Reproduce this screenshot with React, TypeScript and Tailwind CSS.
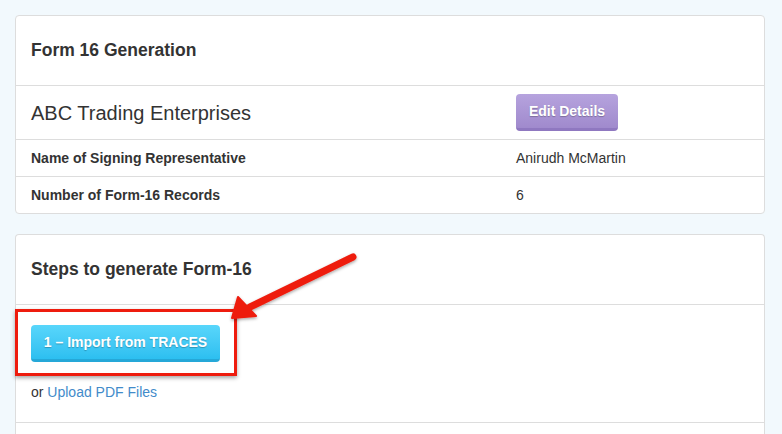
import React from 'react'

const font = { fontFamily: '"Liberation Sans", Arial, sans-serif' }

function InfoRow({ label, value }: { label: string; value: string }) {
  return (
    <div className="flex h-[37px] items-center border-t border-[#dddddd]">
      <div className="w-[500px] pl-[15px] text-[14px] font-bold text-[#333333]">{label}</div>
      <div className="text-[14px] text-[#333333]">{value}</div>
    </div>
  )
}

function Arrow() {
  return (
    <svg
      className="pointer-events-none absolute left-[222px] top-[245px]"
      width="150"
      height="90"
      viewBox="0 0 150 90"
    >
      <defs>
        <filter id="sh" x="-20%" y="-20%" width="140%" height="140%">
          <feDropShadow dx="0" dy="1.5" stdDeviation="1.5" floodColor="#000" floodOpacity="0.35" />
        </filter>
      </defs>
      <g filter="url(#sh)">
        <line x1="131" y1="12" x2="28" y2="62" stroke="#ee1c0e" strokeWidth="7" strokeLinecap="round" />
        <path d="M10 73 L16 52 L34 71 Z" fill="#ee1c0e" stroke="#ee1c0e" strokeWidth="2" strokeLinejoin="round" />
      </g>
    </svg>
  )
}

export default function App() {
  return (
    <div className="relative min-h-[434px] bg-[#f2f9fd] pl-[15px] pr-[17px] pt-[15px]" style={font}>
      <div className="rounded-[4px] border border-[#dddddd] bg-white">
        <div className="flex h-[69px] items-center pl-[15px] text-[17.5px] font-bold text-[#333333]">
          Form 16 Generation
        </div>
        <div className="flex h-[54px] items-center border-t border-[#dddddd]">
          <div className="w-[500px] pl-[15px] text-[20px] text-[#333333]">ABC Trading Enterprises</div>
          <button className="h-[37px] w-[102px] rounded-[4px] border-b-[3px] border-[#8f78c0] bg-gradient-to-b from-[#b6a3de] to-[#a08acd] text-[14px] font-bold text-white [text-shadow:0_1px_1px_rgba(0,0,0,0.25)]">
            Edit Details
          </button>
        </div>
        <InfoRow label="Name of Signing Representative" value="Anirudh McMartin" />
        <InfoRow label="Number of Form-16 Records" value="6" />
      </div>

      <div className="mt-[20px] rounded-t-[4px] border border-b-0 border-[#dddddd] bg-white">
        <div className="flex h-[69px] items-center pl-[15px] text-[17.5px] font-bold text-[#333333]">
          Steps to generate Form-16
        </div>
        <div className="border-t border-[#dddddd] pb-[19px] pl-[15px] pt-[20px]">
          <button className="h-[37px] w-[189px] rounded-[4px] border-b-[3px] border-[#25a8d8] bg-gradient-to-b from-[#58d6fb] to-[#2cbff0] text-[14px] font-bold text-white [text-shadow:0_1px_1px_rgba(0,0,0,0.25)]">
            1 – Import from TRACES
          </button>
          <div className="mt-[20px] text-[14px] text-[#333333]">
            or <span className="text-[#428bca]">Upload PDF Files</span>
          </div>
        </div>
        <div className="h-[20px] border-t border-[#dddddd]" />
      </div>

      <div className="pointer-events-none absolute left-[15px] top-[309px] h-[67px] w-[222px] border-[3px] border-[#ee1c0e] shadow-[0_2px_4px_rgba(0,0,0,0.35)]" />
      <Arrow />
    </div>
  )
}
